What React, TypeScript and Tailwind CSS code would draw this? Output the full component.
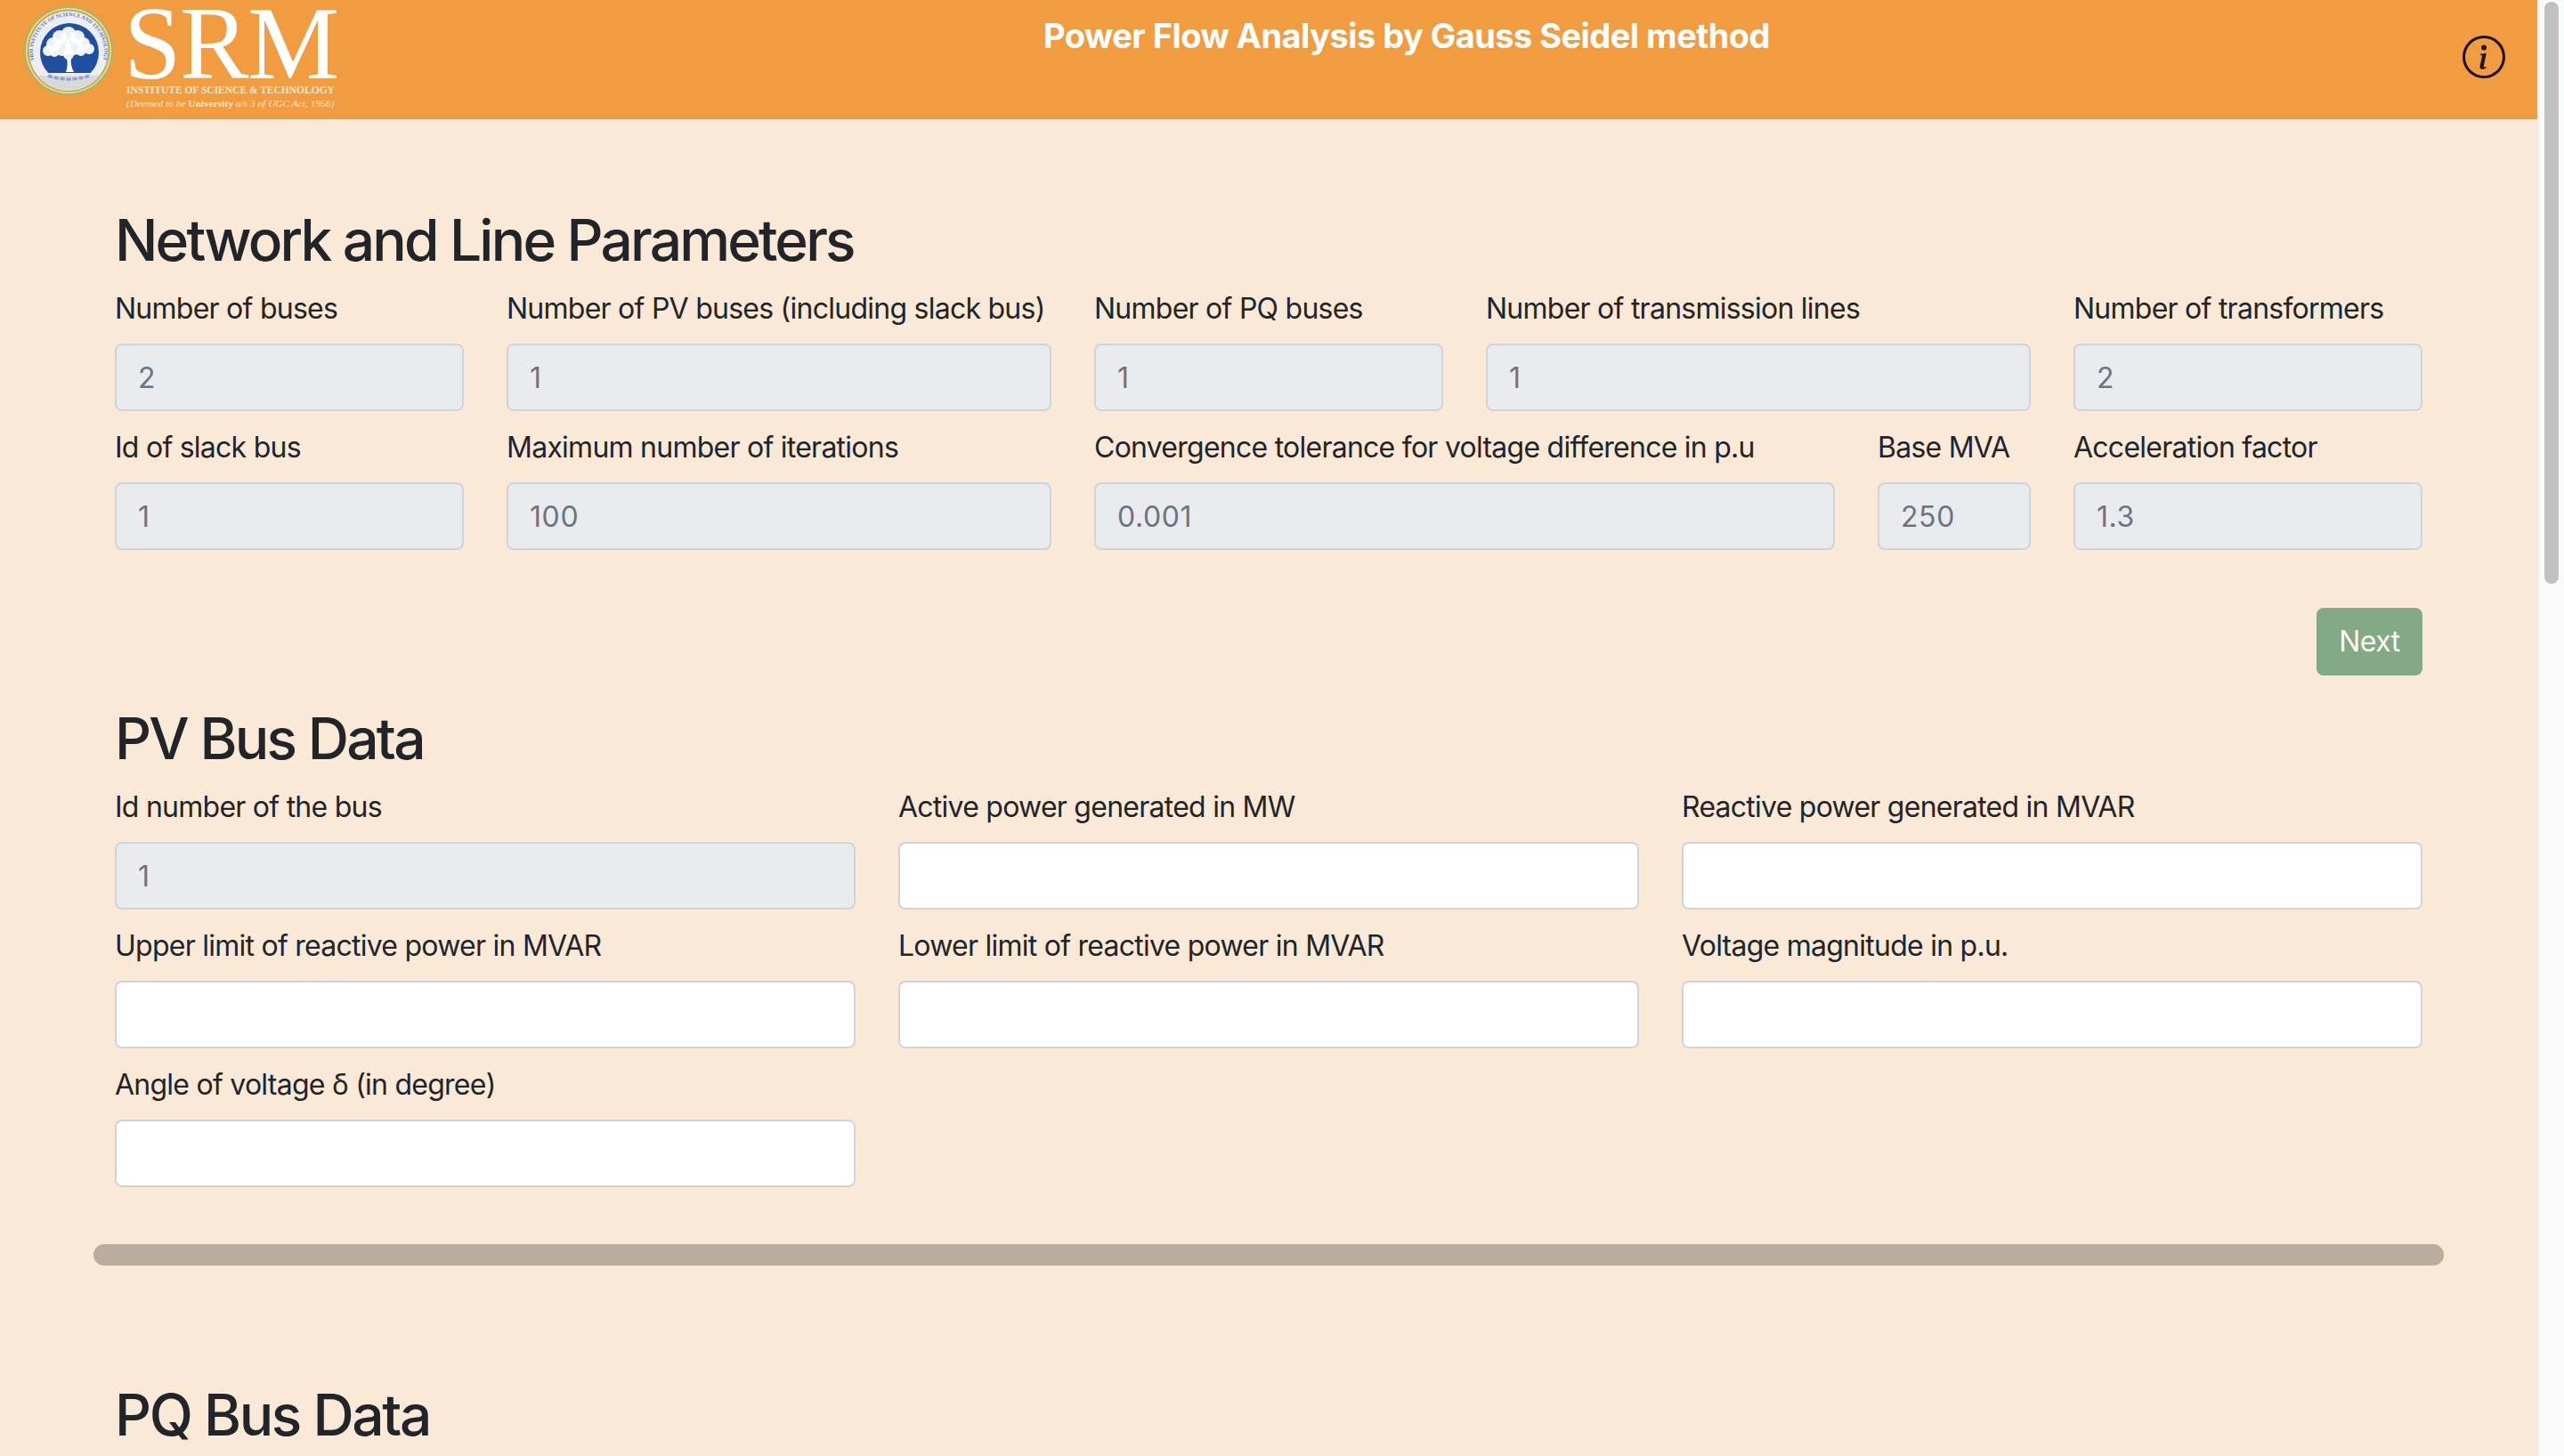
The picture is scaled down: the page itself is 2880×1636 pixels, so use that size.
import { BsInfoCircle } from "react-icons/bs";

type Field = { label: string; span: string; value?: string; locked?: boolean };

const networkFields: Field[] = [
  { label: "Number of buses", span: "col-span-2", value: "2", locked: true },
  { label: "Number of PV buses (including slack bus)", span: "col-span-3", value: "1", locked: true },
  { label: "Number of PQ buses", span: "col-span-2", value: "1", locked: true },
  { label: "Number of transmission lines", span: "col-span-3", value: "1", locked: true },
  { label: "Number of transformers", span: "col-span-2", value: "2", locked: true },
  { label: "Id of slack bus", span: "col-span-2", value: "1", locked: true },
  { label: "Maximum number of iterations", span: "col-span-3", value: "100", locked: true },
  { label: "Convergence tolerance for voltage difference in p.u", span: "col-span-4", value: "0.001", locked: true },
  { label: "Base MVA", span: "col-span-1", value: "250", locked: true },
  { label: "Acceleration factor", span: "col-span-2", value: "1.3", locked: true },
];

const pvFields: Field[] = [
  { label: "Id number of the bus", span: "col-span-4", value: "1", locked: true },
  { label: "Active power generated in MW", span: "col-span-4" },
  { label: "Reactive power generated in MVAR", span: "col-span-4" },
  { label: "Upper limit of reactive power in MVAR", span: "col-span-4" },
  { label: "Lower limit of reactive power in MVAR", span: "col-span-4" },
  { label: "Voltage magnitude in p.u.", span: "col-span-4" },
  { label: "Angle of voltage δ (in degree)", span: "col-span-4" },
];

// crown of the seal's tree, as [cx, cy, r]
const crown = [
  [29, 52, 6], [35, 45, 8], [42, 37, 8], [52, 33, 8], [62, 37, 8], [69, 44, 7],
  [75, 50, 6], [45, 48, 10], [58, 47, 10], [36, 54, 5], [66, 53, 5], [52, 56, 6],
];

function FormField({ field }: { field: Field }) {
  return (
    <div className={`${field.span} mb-[17px] min-w-0`}>
      <label className="mb-[15px] block whitespace-nowrap text-[32px] leading-[48px] tracking-[-0.75px] text-[#212529]">
        {field.label}
      </label>
      <input
        type="text"
        readOnly
        value={field.value ?? ""}
        className={`block h-[76px] w-full rounded-[8px] border-2 border-[#ced4da] px-[24px] pt-[2px] text-[32px] tracking-[0.6px] text-[#6c757d] outline-none ${
          field.locked ? "bg-[#eaebef]" : "bg-white"
        }`}
      />
    </div>
  );
}

function Seal() {
  return (
    <svg viewBox="0 0 104 104" className="h-[104px] w-[104px] shrink-0">
      <defs>
        <path id="seal-arc" d="M13 62 A40 40 0 1 1 91 62" />
        <clipPath id="seal-disc">
          <rect x="0" y="0" width="104" height="77" />
        </clipPath>
        <filter id="seal-soft">
          <feGaussianBlur stdDeviation="0.6" />
        </filter>
      </defs>
      <circle cx="52" cy="52" r="51" fill="#c2ad55" />
      <circle cx="52" cy="52" r="48" fill="#e6dfb5" />
      <circle cx="52" cy="52" r="46.5" fill="#c2ad55" />
      <circle cx="52" cy="52" r="44.5" fill="#eceef4" />
      <path d="M17 80 A44.5 44.5 0 0 0 87 80 Z" fill="#d9d9d9" />
      <text fontFamily="Liberation Serif, serif" fontSize="6" fontWeight="700" fill="#5a78b4">
        <textPath href="#seal-arc" startOffset="50%" textAnchor="middle">
          SRM INSTITUTE OF SCIENCE AND TECHNOLOGY
        </textPath>
      </text>
      <circle cx="53" cy="54" r="33" fill="#1f50a0" clipPath="url(#seal-disc)" />
      <g fill="#ffffff" filter="url(#seal-soft)">
        {crown.map(([cx, cy, r]) => (
          <circle key={`${cx}-${cy}`} cx={cx} cy={cy} r={r} opacity="0.92" />
        ))}
        <path d="M49 76 C51 70 51 66 50 60 L55 60 C54 66 55 70 58 76 Z" />
      </g>
      <path d="M29 80 Q52 88 76 80" stroke="#8aa3d0" strokeWidth="3.5" fill="none" strokeDasharray="5 2" />
    </svg>
  );
}

function Logo() {
  return (
    <div className="flex w-[394px] shrink-0 items-start pl-[25px] pt-[5px]">
      <Seal />
      <div className="ml-[10px] flex w-[240px] flex-col font-['Liberation_Serif',serif] text-white">
        <span className="h-[88px] text-[116px] leading-[88px] tracking-[-1.5px]">SRM</span>
        <span className="mt-[1px] whitespace-nowrap pl-[3px] text-[11.5px] font-bold leading-[14px] text-[#fbe6cf]">
          INSTITUTE OF SCIENCE &amp; TECHNOLOGY
        </span>
        <span className="mt-[1px] whitespace-nowrap pl-[3px] text-[11.4px] italic leading-[14px] text-[#fbe6cf]">
          (Deemed to be <b className="not-italic">University</b> u/s 3 of UGC Act, 1956)
        </span>
      </div>
    </div>
  );
}

export default function App() {
  return (
    <div className="flex h-[1636px] overflow-hidden bg-[#fae9d7] font-['Inter',sans-serif]">
      <div className="min-w-0 flex-1">
        <header className="flex h-[134px] items-start bg-[#f29c42]">
          <Logo />
          <h1 className="flex-1 pt-[16px] text-center text-[38px] font-bold leading-[48px] tracking-[-0.55px] text-white">
            Power Flow Analysis by Gauss Seidel method
          </h1>
          <div className="w-[84px] shrink-0 pt-[40px]">
            <BsInfoCircle className="h-[48px] w-[48px] text-[#1c1308]" />
          </div>
        </header>

        <main className="mx-auto w-[2640px] pt-[98px]">
          <div className="px-[24px]">
            <h2 className="mb-[14px] text-[64px] font-medium leading-[76.8px] tracking-[-2.8px] text-[#212529]">
              Network and Line Parameters
            </h2>
            <div className="grid grid-cols-12 gap-x-[48px]">
              {networkFields.map((f) => (
                <FormField key={f.label} field={f} />
              ))}
            </div>
            <div className="mt-[48px] flex justify-end">
              <button className="h-[76px] w-[119px] rounded-[8px] bg-[#84a985] text-[32px] tracking-[-0.5px] text-[#fdf7ef]">
                Next
              </button>
            </div>

            <h2 className="mb-[14px] mt-[33px] text-[64px] font-medium leading-[76.8px] tracking-[-2.7px] text-[#212529]">
              PV Bus Data
            </h2>
            <div className="grid grid-cols-12 gap-x-[48px]">
              {pvFields.map((f) => (
                <FormField key={f.label} field={f} />
              ))}
            </div>
          </div>

          <div className="mt-[47px] h-[24px] rounded-full bg-[#baac9e]" />

          <div className="px-[24px] pt-[130px]">
            <h2 className="text-[64px] font-medium leading-[76.8px] tracking-[-2.4px] text-[#212529]">PQ Bus Data</h2>
          </div>
        </main>
      </div>

      <div className="w-[30px] shrink-0 border-l-2 border-[#ededed] bg-[#fafafa] pl-[6px] pr-[6px] pt-[2px]">
        <div className="h-[654px] rounded-full bg-[#c1c1c1]" />
      </div>
    </div>
  );
}
